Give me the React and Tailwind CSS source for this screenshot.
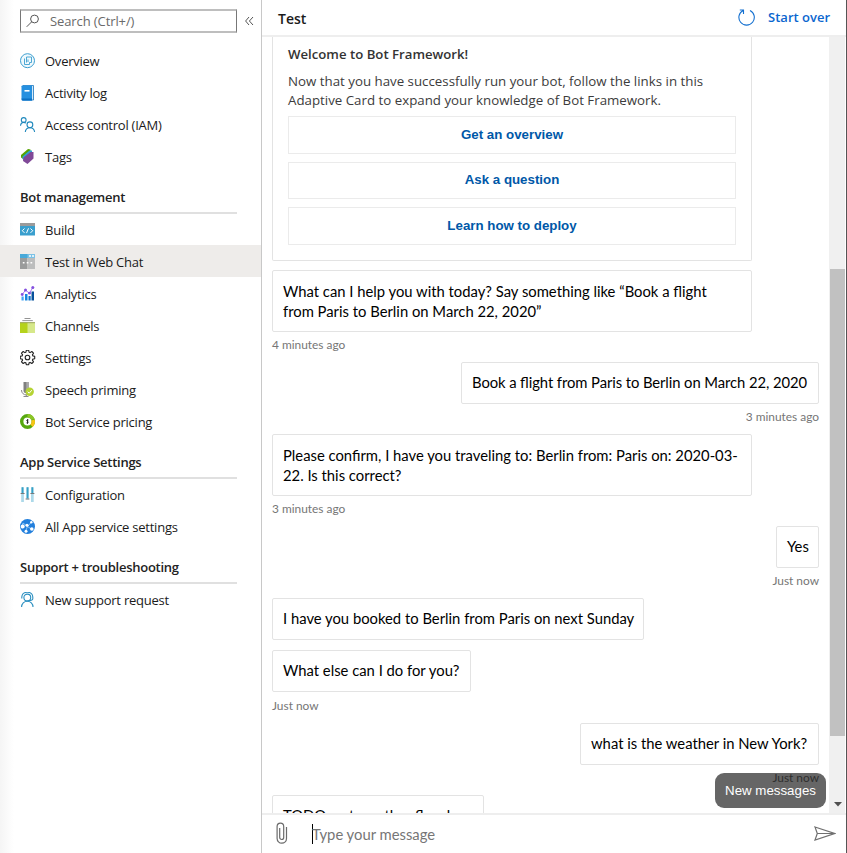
import React from "react";

const OverviewIcon = () => (
  <svg width="16" height="16" viewBox="0 0 16 16" fill="none" stroke="#3c9fd0">
    <circle cx="7.500" cy="7.700" r="7" fill="#f0f9fd" />
    <path d="M6.500 9.500V4h5v5.500H9.500" strokeWidth="0.9" />
    <path d="M4.500 5.500v6H9.500V9.500M8 6.500V9" strokeWidth="0.9" />
  </svg>
);
const LogIcon = () => (
  <svg width="16" height="16" viewBox="0 0 16 16">
    <path d="M3 .5h10.500v14.500H3z" fill="#d5e9f8" stroke="#1b75bb" strokeWidth="0.8" />
    <path d="M1.500 1.200Q1.500.5 2.500.5H12V15.500H2.500Q1.500 15.500 1.500 14.500z" fill="#2590e0" />
    <path d="M1.500 13.500H12v2H2z" fill="#0b70c4" />
    <path d="M4.500 5h5v1.600h-5z" fill="#fff" />
  </svg>
);
const PeopleIcon = () => (
  <svg width="16" height="16" viewBox="0 0 16 16" fill="none" stroke="#2089bd" strokeWidth="1.100">
    <circle cx="3.700" cy="3" r="2.400" />
    <path d="M.5 8.800C.7 6.800 2 5.400 3.700 5.400c1 0 1.700.3 2.300.8" />
    <circle cx="9.900" cy="7.800" r="2.900" />
    <path d="M5.300 15c.2-2.500 2-4.300 4.600-4.300s4.500 1.800 4.700 4.300" />
  </svg>
);
const TagsIcon = () => (
  <svg width="16" height="16" viewBox="0 0 16 16">
    <path d="M1 6 8 0 10.500.5v5L4 10.500 1 8.500z" fill="#57a300" />
    <path d="M2.500 7.500 9.500 1.500 12 1.500v4L5 12 2.500 10z" fill="#2fa3d6" />
    <path d="M3.500 8.500 10.500 3H13.500V9.500L7.500 15 3 12z" fill="#804998" />
  </svg>
);
const BuildIcon = () => (
  <svg width="16" height="16" viewBox="0 0 16 16">
    <path d="M0 1h15V4.500H0z" fill="#9b9b9b" />
    <path d="M0 4h15v9.500H0z" fill="#3a9fce" />
    <path d="M4.500 6.500 2.300 8.700 4.500 10.900M10.500 6.500l2.200 2.200-2.200 2.200M8.500 6.300l-2 4.800" fill="none" stroke="#fff" strokeWidth="1" />
  </svg>
);
const WebChatIcon = () => (
  <svg width="16" height="16" viewBox="0 0 16 16">
    <path d="M0 0h15v4H0z" fill="#48a9d9" />
    <path d="M7.500 0H15v4H7.500z" fill="#7cc2e6" />
    <path d="M0 4h7.500v11H0z" fill="#9a9b9b" />
    <path d="M7.500 4H15v11H7.500z" fill="#bcbdbd" />
    <path d="M9 1.200h2v1.600H9zM12 1.200h2v1.600h-2zM2.800 8h1.700v1.600H2.800zM6.700 8h1.700v1.600H6.700zM10.500 8h1.700v1.600h-1.700z" fill="#fff" />
  </svg>
);
const AnalyticsIcon = () => (
  <svg width="16" height="16" viewBox="0 0 16 16">
    <path d="M1.500 10.500h2.200v4H1.500z" fill="#42a5f5" />
    <path d="M5 8h2.500v6.500H5z" fill="#1688e0" />
    <path d="M8.500 10h2.200v4.500H8.500z" fill="#1074cc" />
    <path d="M11.500 5.500H14v9h-2.500z" fill="#07509b" />
    <path d="M2.200 8.500 5.500 4.200l4 3 3.200-5.500" fill="none" stroke="#a67af4" />
    <g fill="#8450df"><circle cx="2.200" cy="8.500" r="1.400" /><circle cx="5.500" cy="4" r="1.500" /><circle cx="9.500" cy="7.200" r="1.400" /><circle cx="12.800" cy="1.600" r="1.500" /></g>
  </svg>
);
const ChannelsIcon = () => (
  <svg width="16" height="16" viewBox="0 0 16 16">
    <path d="M4.500.5h6" stroke="#888" strokeWidth="0.9" />
    <path d="M2.300 2.600h10.500" stroke="#999" />
    <path d="M0 4.200h15V15H0z" fill="#b5d21c" />
    <path d="M7.500 4.200H15V15H7.500z" fill="#d6e88a" />
    <path d="M0 4.200h15v1H0z" fill="#9fa66b" />
  </svg>
);
const GearIcon = () => (
  <svg width="16" height="16" viewBox="0.500 0.500 16 16" fill="none" stroke="#222" strokeWidth="1.100" strokeLinejoin="round">
    <path d="M6.800.8h2.400l.4 1.900 1 .4 1.700-1.100 1.700 1.700-1.100 1.700.4 1 1.900.4v2.400l-1.900.4-.4 1 1.100 1.700-1.700 1.700-1.700-1.100-1 .4-.4 1.900H6.800l-.4-1.900-1-.4L3.700 14 2 12.300l1.100-1.700-.4-1L.8 9.200V6.800l1.900-.4.4-1L2 3.700 3.700 2l1.700 1.100 1-.4z" />
    <circle cx="8" cy="8" r="2.300" />
  </svg>
);
const MicIcon = () => (
  <svg width="16" height="16" viewBox="0 0 16 16">
    <path d="M3.500 0H9V8.500a2.700 2.700 0 0 1-5.500 0z" fill="#808080" />
    <path d="M6.300 0H9V8.500a2.700 2.700 0 0 1-2.700 2.700z" fill="#aaa" />
    <path d="M1.500 8c0 6.500 9.300 6.500 9.300 0M6.300 12.500v2M3.500 14.500h5" fill="none" stroke="#8b8b8b" />
    <circle cx="9.700" cy="9.700" r="4.200" fill="#b5d334" />
    <path d="m7.700 9.700 1.500 1.500 2.600-3" fill="none" stroke="#fff" />
  </svg>
);
const PricingIcon = () => (
  <svg width="16" height="16" viewBox="0.500 0.500 16 16">
    <circle cx="8" cy="8" r="5.800" fill="#fff" stroke="#57a80f" strokeWidth="3.400" />
    <path d="M8 2.200a5.800 5.800 0 0 1 5.400 3.800" fill="none" stroke="#8bc527" strokeWidth="3.400" />
    <path d="M13.500 6.500a5.800 5.800 0 0 1-1.500 5.700" fill="none" stroke="#f6c515" strokeWidth="3.400" />
    <path d="M9 6.500c-1.800-.6-2.400.8-1 1.300s.8 2-1 1.500M8 5.700v4.600" fill="none" stroke="#222" strokeWidth="0.9" />
  </svg>
);
const ConfigIcon = () => (
  <svg width="16" height="16" viewBox="0 0 16 16">
    <path d="M1.200.2h2.700v14.800H1.200zM6.200.2h2.700v12H6.200zM11 .2h2.700v14.800H11z" fill="#acd9e9" />
    <path d="M1.700.2h1.700V6H1.700zM6.700.2h1.700v11H6.700zM11.500.2h1.700V6h-1.700z" fill="#36a0c5" />
    <path d="M.6 6.500h4M10.400 6.500h4M5.600 12h3.800" stroke="#77797a" />
  </svg>
);
const GlobeIcon = () => (
  <svg width="16" height="16" viewBox="0.500 0.500 16 16">
    <circle cx="8" cy="8" r="7.500" fill="#227fdc" />
    <path d="M3.500 4.500 8 8l4-4.500M8 8l4.500 3M8 8l-2 5M3.500 4.500 2.500 10" fill="none" stroke="#8cc5f4" />
    <g fill="#fff"><circle cx="3.200" cy="8" r="2" /><circle cx="7.500" cy="6.700" r="1.500" /><circle cx="11.800" cy="3.800" r="1.200" /><circle cx="12.300" cy="10.500" r="1.800" /><circle cx="6.500" cy="12.800" r="1.500" /></g>
  </svg>
);
const SupportIcon = () => (
  <svg width="16" height="16" viewBox="0.700 0.500 16 16" fill="none" stroke="#2b8fc0" strokeWidth="1.100">
    <path d="M2.500 7V5.500C3-.8 13-.8 13.500 5.500v1.700c0 1-1.500 1.800-4.500 1.800" />
    <circle cx="8" cy="6" r="3.400" />
    <path d="M2.300 15.500c0-3.200 2.500-5.700 5.700-5.700s5.700 2.500 5.700 5.700" />
  </svg>
);

function NavItem({ icon: Icon, label, selected, low }) {
  return (
    <div className={`flex h-8 shrink-0 items-center pl-5 ${low ? "pt-[2px]" : ""} ${selected ? "bg-[#edebe9]/95" : ""}`}>
      <Icon />
      <span className="ml-[9px] whitespace-nowrap text-[13px] leading-4 tracking-[-0.24px] text-[#1b1b1b]">{label}</span>
    </div>
  );
}

function Section({ title, items, first }) {
  return (
    <>
      <div className={`mx-5 -mb-px mr-6 shrink-0 border-b-2 border-[#e0e0e0] ${first ? "h-[41px] pt-[15px]" : "h-[42px] pt-4"}`}>
        <div className="whitespace-nowrap text-[13px] font-semibold leading-[18px] tracking-[-0.26px] text-[#222]">{title}</div>
      </div>
      {items.map(([icon, label, selected]) => (
        <NavItem key={label} icon={icon} label={label} selected={selected} low />
      ))}
    </>
  );
}

function Sidebar() {
  return (
    <aside className="flex w-[262px] shrink-0 flex-col border-r border-[#c8c8c8] bg-[linear-gradient(to_right,#f5f5f5,#ffffff_14px)] pt-[9px] font-['Open_Sans',sans-serif]">
      <div className="mb-3 flex h-6 shrink-0 items-center pl-5">
        <div className="flex h-6 w-[217px] items-center border border-y-2 border-x-[#777] border-y-[#bebebe] bg-white pl-[5px]">
          <svg width="14" height="14" viewBox="0 0 14 14" fill="none" stroke="#555"><circle cx="8.500" cy="5" r="3.900" /><path d="M5.700 7.800.7 12.800" /></svg>
          <span className="ml-[10px] text-[13px] leading-4 tracking-[-0.1px] text-[#6a6a6a]">Search (Ctrl+/)</span>
        </div>
        <svg className="ml-2" width="9" height="10" viewBox="0 0 9 10" fill="none" stroke="#555"><path d="M4 1 .6 5l3.400 4M8 1 4.400 5l3.600 4" /></svg>
      </div>
      <NavItem icon={OverviewIcon} label="Overview" />
      <NavItem icon={LogIcon} label="Activity log" />
      <NavItem icon={PeopleIcon} label="Access control (IAM)" />
      <NavItem icon={TagsIcon} label="Tags" />
      <Section
        first
        title="Bot management"
        items={[
          [BuildIcon, "Build"],
          [WebChatIcon, "Test in Web Chat", true],
          [AnalyticsIcon, "Analytics"],
          [ChannelsIcon, "Channels"],
          [GearIcon, "Settings"],
          [MicIcon, "Speech priming"],
          [PricingIcon, "Bot Service pricing"],
        ]}
      />
      <Section title="App Service Settings" items={[[ConfigIcon, "Configuration"], [GlobeIcon, "All App service settings"]]} />
      <Section title="Support + troubleshooting" items={[[SupportIcon, "New support request"]]} />
    </aside>
  );
}

const bubble = "shrink-0 whitespace-nowrap rounded-[2px] border border-[#e3e3e3] bg-white text-[14.8px] leading-[19.500px] text-black [font-feature-settings:'liga']";
const stamp = "h-4 shrink-0 whitespace-nowrap text-[11.9px] leading-4 text-[#767676]";

function Chat() {
  return (
    <div className="flex min-w-0 flex-1 flex-col overflow-hidden pl-[10px] pr-[10px] font-['Lato',sans-serif]">
      <div className="h-[224px] w-[480px] shrink-0 rounded-b-[2px] border border-t-0 border-[#e3e3e3] px-[15px] pt-2 font-['Open_Sans',sans-serif]">
        <div className="whitespace-nowrap text-[13.2px] font-semibold leading-[18px] text-[#333]">Welcome to Bot Framework!</div>
        <div className="mt-[9px] whitespace-nowrap text-[13.300px] leading-[18.500px] text-[#3c3c3c]">
          Now that you have successfully run your bot, follow the links in this
          <br />
          Adaptive Card to expand your knowledge of Bot Framework.
        </div>
        <div className="mt-[7px] flex flex-col gap-2 font-['Liberation_Sans',Arial,sans-serif] text-[13.300px] font-bold text-[#0058a8]">
          {["Get an overview", "Ask a question", "Learn how to deploy"].map((t) => (
            <div key={t} className="flex h-[37.500px] items-center justify-center border border-[#ebebeb]">{t}</div>
          ))}
        </div>
      </div>
      <div className={`${bubble} mt-[9px] h-[62px] w-[480px] px-[10px] pt-[11px]`}>
        What can I help you with today? Say something like “Book a flight
        <br />
        from Paris to Berlin on March 22, 2020”
      </div>
      <div className={`${stamp} mt-[5px]`}>4 minutes ago</div>
      <div className={`${bubble} mt-[9px] h-[42px] w-[358px] self-end px-[10px] pt-[10px] tracking-[-0.08px]`}>Book a flight from Paris to Berlin on March 22, 2020</div>
      <div className={`${stamp} mt-[5px] self-end`}>3 minutes ago</div>
      <div className={`${bubble} mt-[9px] h-[62px] w-[480px] px-[10px] pt-[11px]`}>
        Please confirm, I have you traveling to: Berlin from: Paris on: 2020-03-
        <br />
        22. Is this correct?
      </div>
      <div className={`${stamp} mt-[5px]`}>3 minutes ago</div>
      <div className={`${bubble} mt-[9px] h-[42px] w-[43px] self-end px-[10px] pt-[10px]`}>Yes</div>
      <div className={`${stamp} mt-[5px] self-end`}>Just now</div>
      <div className={`${bubble} mt-[9px] h-[42px] w-[372px] px-[10px] pt-[10px]`}>I have you booked to Berlin from Paris on next Sunday</div>
      <div className={`${bubble} mt-[10px] h-[42px] w-[199px] px-[10px] pt-[10px]`}>What else can I do for you?</div>
      <div className={`${stamp} mt-[6px]`}>Just now</div>
      <div className={`${bubble} mt-[9px] h-[42px] w-[239px] self-end px-[10px] pt-[10px]`}>what is the weather in New York?</div>
      <div className={`${stamp} mt-[5px] self-end`}>Just now</div>
      <div className={`${bubble} mt-[9px] h-[42px] w-[212px] px-[10px] pt-[10px]`}>TODO: get weather flow here</div>
    </div>
  );
}

export default function App() {
  return (
    <div className="flex h-[853px] w-[847px] overflow-hidden bg-white">
      <Sidebar />
      <main className="relative flex min-w-0 flex-1 flex-col border-r border-[#555]">
        <header className="flex h-[37px] shrink-0 items-center border-b-2 border-[#eee] pl-4 pr-4 pt-px font-['Open_Sans',sans-serif]">
          <span className="text-[14px] font-semibold text-[#1b1b1b]">Test</span>
          <svg className="ml-auto" width="18" height="18" viewBox="0 0 18 18" fill="none" stroke="#1470d0" strokeWidth="1.100"><path d="M12 1.500A7.700 7.700 0 1 1 5.200 1.500M1.800 1h3.700v4" /></svg>
          <span className="ml-[12px] text-[13px] font-semibold text-[#0b66cf]">Start over</span>
        </header>
        <div className="flex h-[776px] shrink-0">
          <Chat />
          <div className="mr-px flex w-4 shrink-0 flex-col items-center justify-between bg-[#f0f0f0] pb-[6px] pl-px pt-[232px]">
            <div className="h-[467px] w-[15px] bg-[#c1c1c1]" />
            <svg width="8" height="5" viewBox="0 0 8 5"><path d="M0 0h8L4 4.500z" fill="#505050" /></svg>
          </div>
        </div>
        <footer className="flex h-10 shrink-0 items-center border-t-2 border-[#eee] pl-[14px] pr-[10px] font-['Lato',sans-serif]">
          <svg width="12" height="22" viewBox="0 0 12 22" className="-mt-[3px]" fill="none" stroke="#6b6b6b" strokeWidth="1.200"><path d="M10.500 5v11.500a4.700 4.700 0 0 1-9.400 0V4.500a3.300 3.300 0 0 1 6.600 0V15.500a2 2 0 0 1-4 0V6" /></svg>
          <div className="ml-6 h-5 w-px bg-black" />
          <span className="-ml-px text-[14.800px] leading-5 text-[#767676]">Type your message</span>
          <svg className="-mt-[2px] ml-auto" width="22" height="15" viewBox="0 0 22 15" fill="none" stroke="#707070" strokeWidth="1.200"><path d="M1 1 20.500 7.500 1 14l2.300-6.500zM3.300 7.500h17" /></svg>
        </footer>
        <div className="absolute left-[453px] top-[773px] flex h-[35px] w-[111px] items-center justify-center rounded-[9px] bg-black/60 font-['Liberation_Sans',Arial,sans-serif] text-[13.300px] text-white">New messages</div>
      </main>
    </div>
  );
}
